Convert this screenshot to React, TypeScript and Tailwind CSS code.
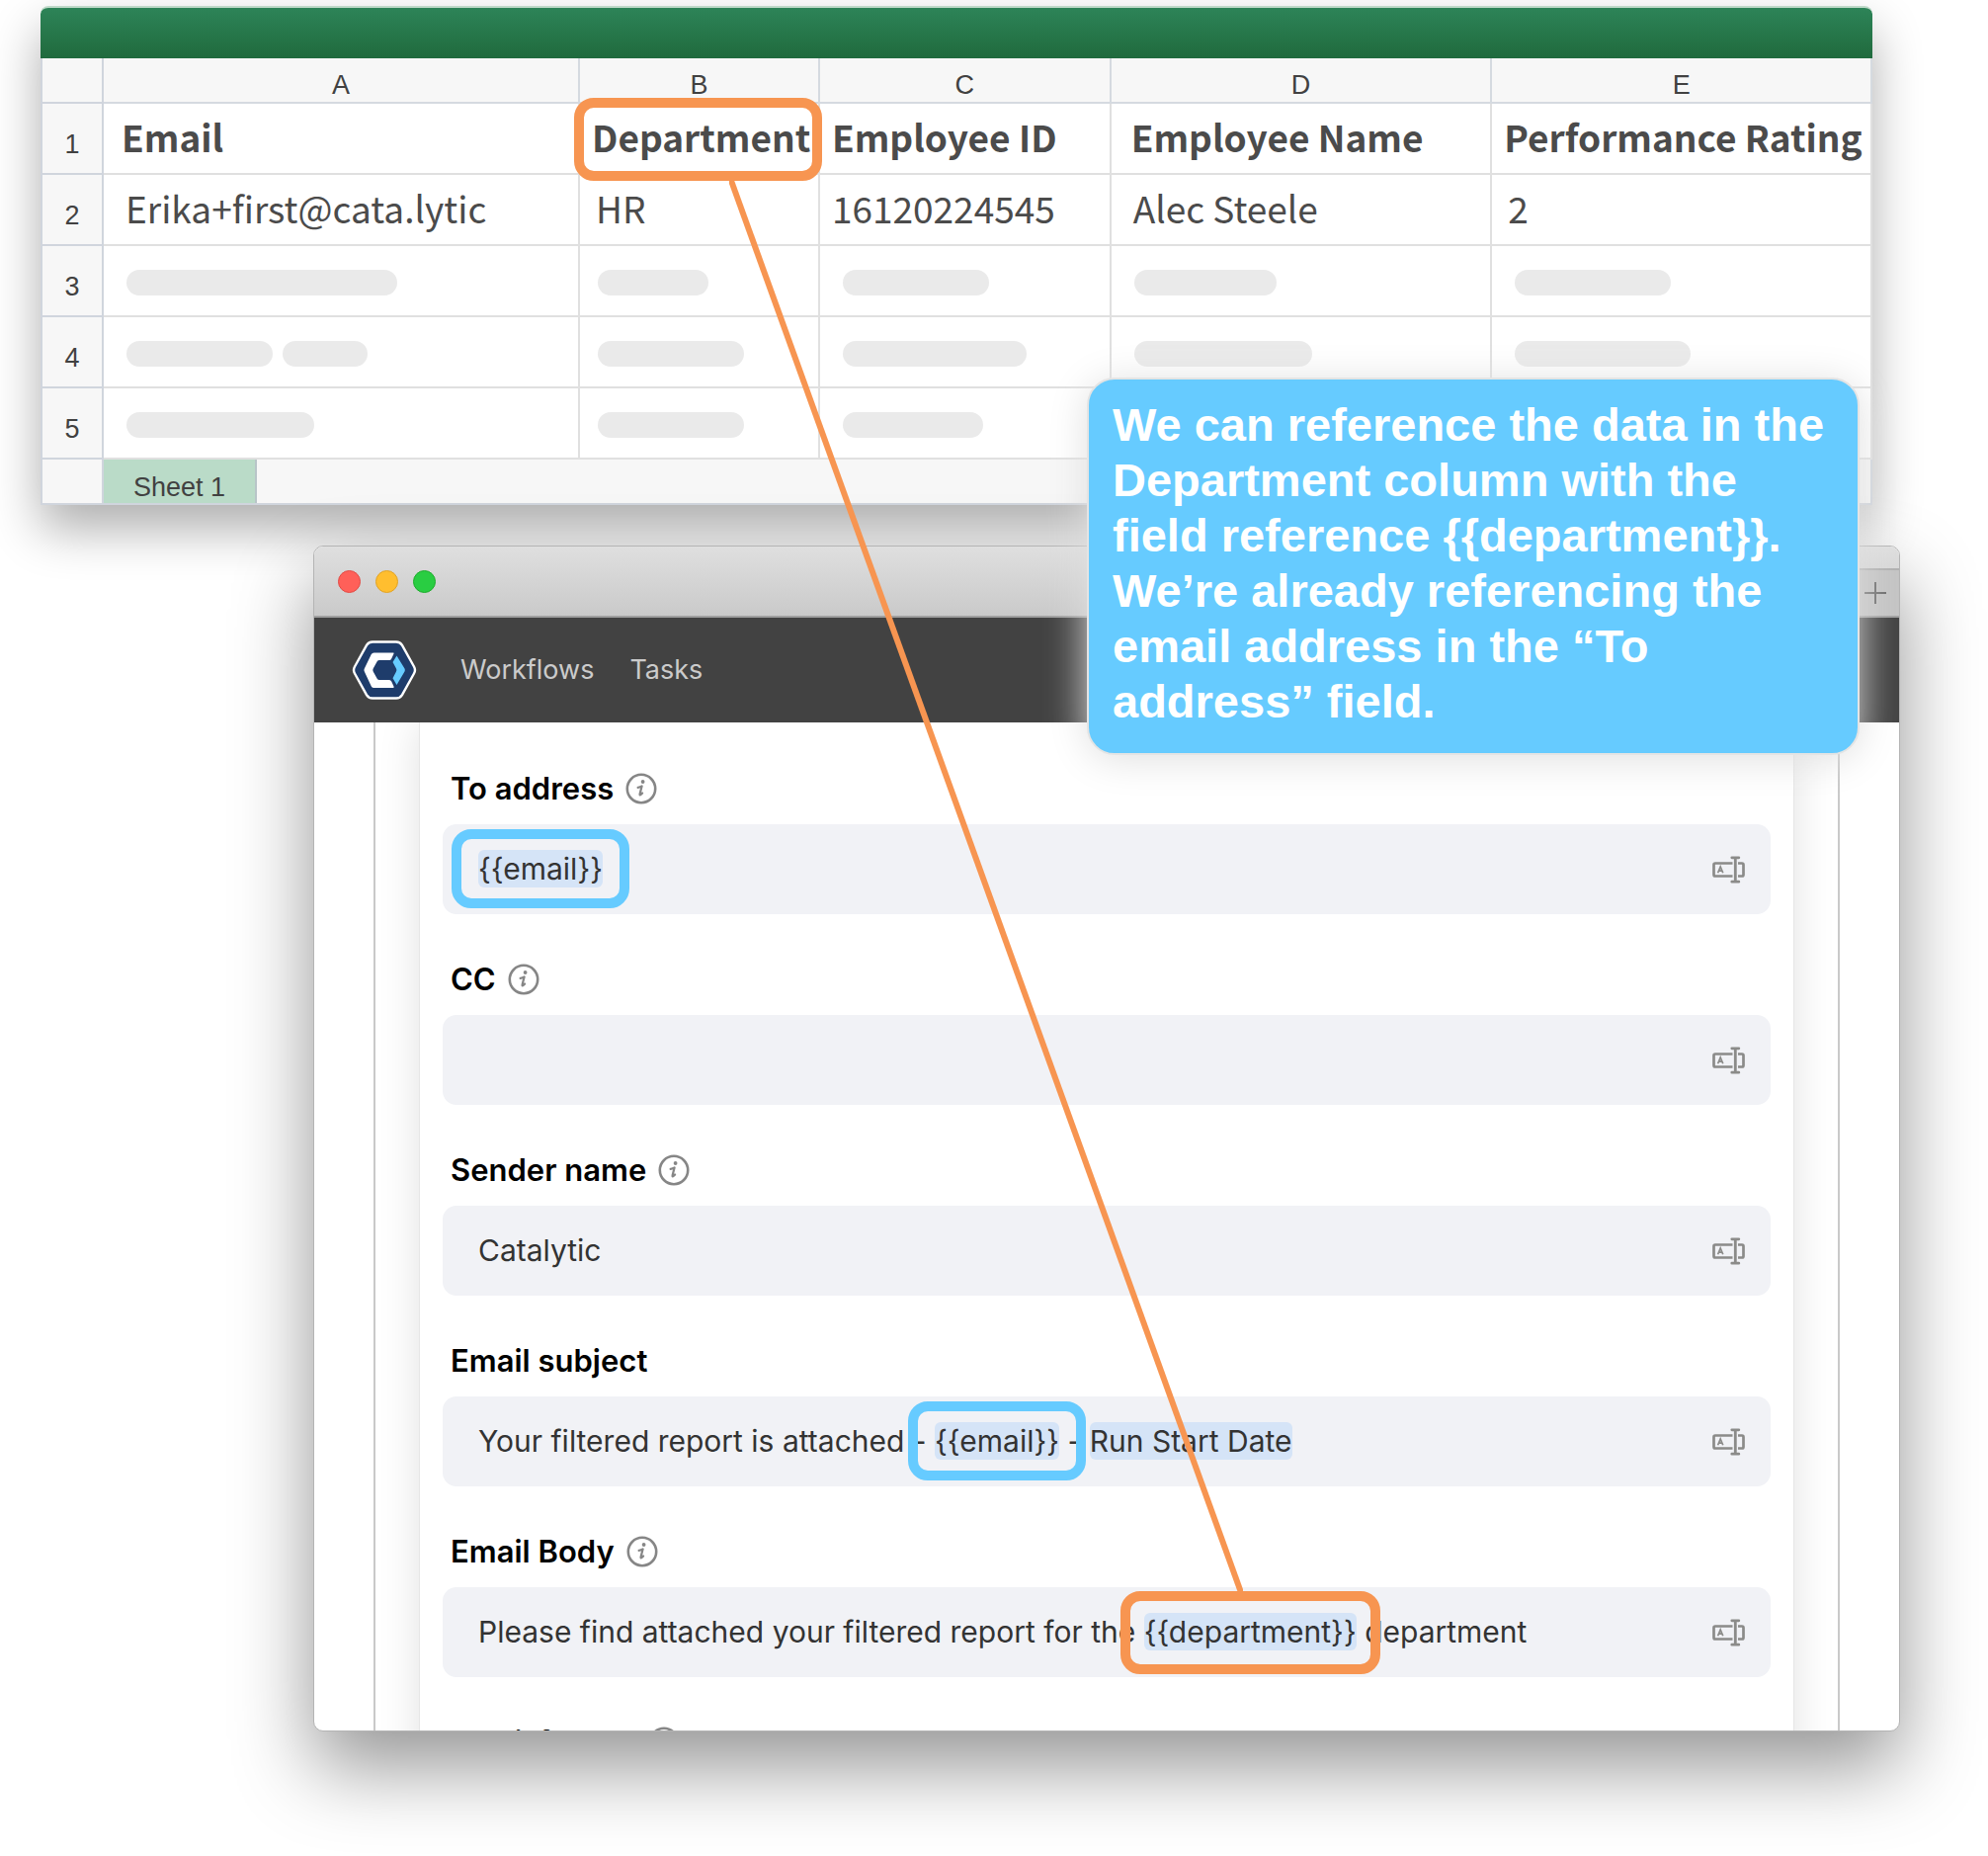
import React from "react";

const columns = ["A", "B", "C", "D", "E"];

const InfoIcon = () => (
  <svg className="h-8 w-8 shrink-0" viewBox="0 0 32 32" fill="none" aria-hidden="true">
    <circle cx="16" cy="16" r="14.2" stroke="#868686" strokeWidth="2.6" />
    <circle cx="17.6" cy="9" r="1.9" fill="#868686" />
    <path
      d="M12.600 14.800c1.600-.3 2.800-.9 4-1.400l-2 7.800c-.3 1.300.2 1.500 1 .8.6-.5 1-.9 1.500-1.500"
      stroke="#868686"
      strokeWidth="2.2"
      strokeLinecap="round"
      strokeLinejoin="round"
    />
  </svg>
);

const InsertFieldIcon = () => (
  <svg className="h-7 w-[33px]" viewBox="0 0 33 28" fill="none" aria-hidden="true">
    <path
      d="M20.500 7.500H3Q1.500 7.500 1.500 9v10q0 1.500 1.500 1.500h17.500M26 7.500h4q1.500 0 1.500 1.500v10q0 1.500-1.500 1.500h-4"
      stroke="#8b8b89"
      strokeWidth="2.7"
    />
    <path d="M19.800 1.800h7M19.800 26.200h7M23.300 1.800v24.400" stroke="#8b8b89" strokeWidth="2.8" strokeLinecap="round" />
    <path d="M5.600 17.300l2.600-6.400 2.600 6.400M6.600 15.200h3.300" stroke="#8b8b89" strokeWidth="1.7" />
  </svg>
);

const Logo = () => (
  <svg className="h-[60px] w-[66px]" viewBox="0 0 66 60" aria-hidden="true">
    <path
      d="M21 1.500h24q4 0 6 3.400l12 21.600q2 3.500 0 7L51 55.100q-2 3.400-6 3.400H21q-4 0-6-3.400L3 33.500q-2-3.500 0-7L15 4.900q2-3.400 6-3.400z"
      fill="#1e3c6b"
      stroke="#fff"
      strokeWidth="2.4"
    />
    <path
      d="M22.500 12.500H42q1 0 .5 1l-2.300 5q-.7 1.500-2.200 1.500H28q-1.500 0-2.300 1.300l-4 7.200q-.8 1.500 0 3l4 7.200q.8 1.300 2.300 1.300h10q1.500 0 2.200 1.500l2.300 5q.5 1.500-.5 1.500H22.500q-1.800 0-2.700-1.600l-7-14.900q-.8-1.500 0-3l7-14.400q.9-1.600 2.700-1.600z"
      fill="#fff"
    />
    <path d="M45.500 15.500l8 13q.8 1.500 0 3l-8 13.500-4-6.800 3.500-6.700q.8-1.500 0-3l-3.500-6.500z" fill="#66cbff" />
  </svg>
);

const Bar = ({ size }: { size: string }) => (
  <span className={`inline-block h-[26px] rounded-full bg-[#eaeaea] ${size}`} />
);

const cell = "border-b-2 border-r-2 border-[#e0e0e0] p-0 pb-1 text-left align-middle";
const gutter = "border-x-2 border-b-2 border-[#d0d5dd] bg-[#f7f7f7] p-0 pt-3 text-center font-normal";

const placeholders = [
  { row: 3, bars: [["w-[274px]"], ["w-[112px]"], ["w-[148px]"], ["w-36"], ["w-[158px]"]] },
  { row: 4, bars: [["w-[148px]", "w-[86px]"], ["w-[148px]"], ["w-[186px]"], ["w-[180px]"], ["w-[178px]"]] },
  { row: 5, bars: [["w-[190px]"], ["w-[148px]"], ["w-[142px]"], ["w-36"], ["w-[158px]"]] },
];

const Spreadsheet = () => (
  <section className="ml-[41px] mr-[117px] rounded-t-lg font-['Liberation_Sans',sans-serif] text-[27px] text-[#414141] shadow-[0_24px_50px_rgba(0,0,0,0.32)]">
    <div className="h-[53px] rounded-t-lg border-t-2 border-[#bfd9c9] bg-linear-to-b from-[#2d8458] to-[#206a3d]" />
    <table className="w-full table-fixed border-separate border-spacing-0 bg-white">
      <colgroup>
        <col className="w-[64px]" />
        <col className="w-[26%]" />
        <col className="w-[13.1%]" />
        <col className="w-[15.9%]" />
        <col className="w-[20.8%]" />
        <col />
      </colgroup>
      <thead>
        <tr className="h-[46px] bg-[#f7f7f7]">
          <td className="border-x-2 border-b-2 border-[#d0d5dd]" />
          {columns.map((name) => (
            <th key={name} scope="col" className="border-b-2 border-r-2 border-[#d5dae0] p-0 pt-[10px] font-normal leading-8">
              {name}
            </th>
          ))}
        </tr>
      </thead>
      <tbody className="whitespace-nowrap">
        <tr className="h-[72px] font-['Noto_Sans_CJK_SC',sans-serif] text-[37px] font-bold leading-10 text-[#4b4b4b]">
          <th scope="row" className={`${gutter} font-['Liberation_Sans',sans-serif] text-[27px] text-[#414141]`}>1</th>
          <td className={`${cell} pl-[18px]`}>Email</td>
          <td className={`${cell} pl-3`}>
            <span className="relative">
              Department
              <span className="absolute -bottom-[18px] -left-[18px] -right-3 -top-3 rounded-[20px] border-10 border-[#f79551]" />
            </span>
          </td>
          <td className={`${cell} pl-3`}>Employee ID</td>
          <td className={`${cell} pl-5`}>Employee Name</td>
          <td className={`${cell} pl-3`}>Performance Rating</td>
        </tr>
        <tr className="h-[72px] font-['Noto_Sans_CJK_SC',sans-serif] text-[37px] leading-10 text-[#4b4b4b]">
          <th scope="row" className={`${gutter} font-['Liberation_Sans',sans-serif] text-[27px] text-[#414141]`}>2</th>
          <td className={`${cell} pl-[22px]`}>Erika+first@cata.lytic</td>
          <td className={`${cell} pl-4`}>HR</td>
          <td className={`${cell} pl-3`}>16120224545</td>
          <td className={`${cell} pl-[22px]`}>Alec Steele</td>
          <td className={`${cell} pl-4`}>2</td>
        </tr>
        {placeholders.map(({ row, bars }) => (
          <tr key={row} className="h-[72px]">
            <th scope="row" className={gutter}>{row}</th>
            {bars.map((sizes, i) => (
              <td key={i} className={`${cell} ${i === 1 ? "pl-[18px]" : "pl-[23px]"}`}>
                <div className="flex gap-[10px] pt-2">
                  {sizes.map((size) => (
                    <Bar key={size} size={size} />
                  ))}
                </div>
              </td>
            ))}
          </tr>
        ))}
      </tbody>
    </table>
    <div className="flex h-[46px] border-2 border-t-0 border-[#d0d5dd] bg-[#f7f7f7]">
      <div className="w-[62px] border-r-2 border-[#d0d5dd]" />
      <button className="border-r-2 border-[#b8c5c8] bg-[#badbc8] px-[30px] pt-3 leading-8">Sheet 1</button>
    </div>
  </section>
);

const Chip = ({ children, ring }: { children: React.ReactNode; ring?: string }) => (
  <span className="relative inline-block rounded-md bg-[#d5e4f7] leading-[38px]">
    {children}
    {ring && <span className={`pointer-events-none absolute rounded-[20px] border-10 ${ring}`} />}
  </span>
);

const FieldLabel = ({ id, text, info }: { id: string; text: string; info?: boolean }) => (
  <div className="flex h-8 items-center gap-3 pl-2">
    <label id={`${id}-label`} htmlFor={id} className="text-[31px] font-semibold text-black">
      {text}
    </label>
    {info && <InfoIcon />}
  </div>
);

const Field = ({
  id,
  label,
  info,
  value,
  children,
}: {
  id: string;
  label: string;
  info?: boolean;
  value?: string;
  children?: React.ReactNode;
}) => (
  <div className="flex flex-col gap-5">
    <FieldLabel id={id} text={label} info={info} />
    <div className="flex h-[91px] items-center rounded-[14px] bg-[#f1f2f6] pl-9 pr-[26px] text-[30px] text-[#333]">
      {children ? (
        <div
          id={id}
          role="textbox"
          aria-labelledby={`${id}-label`}
          contentEditable
          suppressContentEditableWarning
          className="flex-1 whitespace-pre outline-none"
        >
          {children}
        </div>
      ) : (
        <input id={id} defaultValue={value} className="min-w-0 flex-1 bg-transparent outline-none" />
      )}
      <button aria-label={`Insert field into ${label}`}>
        <InsertFieldIcon />
      </button>
    </div>
  </div>
);

const BrowserWindow = () => (
  <section className="ml-[317px] mr-[89px] mt-[41px] overflow-hidden rounded-[10px] border border-[#b4b4b4] bg-white font-[Inter,sans-serif] shadow-[0_36px_80px_rgba(0,0,0,0.42)]">
    <div className="flex h-[72px] items-center justify-between border-b-2 border-[#a0a0a0] bg-linear-to-b from-[#dfdfdf] to-[#cacaca]">
      <div className="flex gap-[15px] pl-6">
        <span className="size-[23px] rounded-full border border-[#e24b45] bg-[#ff6059]" />
        <span className="size-[23px] rounded-full border border-[#e1a325] bg-[#ffbe2f]" />
        <span className="size-[23px] rounded-full border border-[#1dad2b] bg-[#29cd42]" />
      </div>
      <button aria-label="New tab" className="flex h-12 w-12 items-center justify-center self-end border-t-2 border-[#b0b0b0] bg-[#c4c4c4]">
        <svg className="size-[22px]" viewBox="0 0 22 22" stroke="#6a6a6a" strokeWidth="2">
          <path d="M11 0v22M0 11h22" />
        </svg>
      </button>
    </div>
    <nav className="flex h-[106px] items-center bg-[#424242] pl-[38px] text-[27px] text-[#cbcbcb]">
      <a href="#" aria-label="Home">
        <Logo />
      </a>
      <a href="#" className="ml-11">Workflows</a>
      <a href="#" className="ml-9">Tasks</a>
    </nav>
    <div className="flex h-[1020px] overflow-hidden px-[60px]">
      <div className="flex-1 border-x-2 border-[#c9c9c9] px-11">
        <form className="flex flex-col gap-[50px] border-x border-[#e6e6e6] px-[23px] pt-[51px] shadow-[0_0_40px_rgba(0,0,0,0.12)]">
          <Field id="to" label="To address" info>
            <Chip ring="-inset-x-[27px] -inset-y-[21px] border-[#66cbff]">{"{{email}}"}</Chip>
          </Field>
          <Field id="cc" label="CC" info />
          <Field id="sender" label="Sender name" info value="Catalytic" />
          <Field id="subject" label="Email subject">
            Your filtered report is attached - <Chip ring="-inset-x-[27px] -inset-y-[21px] border-[#66cbff]">{"{{email}}"}</Chip> -{" "}
            <Chip>Run Start Date</Chip>
          </Field>
          <Field id="body" label="Email Body" info>
            Please find attached your filtered report for the{" "}
            <Chip ring="-inset-x-6 -top-[22px] -bottom-6 border-[#f79551]">{"{{department}}"}</Chip> department
          </Field>
          <Field id="format" label="Email format" info />
        </form>
      </div>
    </div>
  </section>
);

export default function App() {
  return (
    <main className="relative overflow-hidden bg-white pb-32 pt-[6px]">
      <Spreadsheet />
      <BrowserWindow />
      <svg
        className="pointer-events-none absolute left-[738px] top-[180px] h-[1434px] w-[520px]"
        viewBox="0 0 520 1434"
        aria-hidden="true"
      >
        <path d="M1 0l518 1434" stroke="#f79551" strokeWidth="6" />
      </svg>
      <aside className="absolute right-[130px] top-[382px] w-[782px] rounded-[28px] border-2 border-[#e4e4e4] bg-[#66cbff] px-6 pb-6 pt-[18px] font-['Liberation_Sans',sans-serif] text-[47px] font-bold leading-14 text-white shadow-[0_4px_40px_#dfdfdf]">
        We can reference the data in the
        <br />
        Department column with the
        <br />
        field reference {"{{department}}"}.
        <br />
        We’re already referencing the
        <br />
        email address in the “To
        <br />
        address” field.
      </aside>
    </main>
  );
}
